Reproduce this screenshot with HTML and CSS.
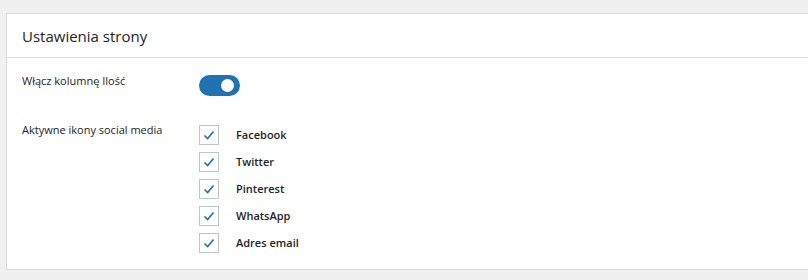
FILE: index.html
```html
<!DOCTYPE html>
<html lang="pl">
<head>
  <meta charset="UTF-8" />
  <meta name="viewport" content="width=device-width, initial-scale=1.0"/>
  <title>Ustawienia strony</title>
  <link rel="stylesheet" href="styles.css">
</head>
<body>

  <div class="card">
    <div class="card-header">Ustawienia strony</div>
    <div class="card-body">

      <div class="row">
        <div class="label">Włącz kolumnę Ilość</div>
        <div class="control">
          <span class="toggle on"><span class="knob"></span></span>
        </div>
      </div>

      <div class="row">
        <div class="label">Aktywne ikony social media</div>
        <div class="control checks">
          <label class="check"><span class="box"><svg viewBox="0 0 20 20"><path d="M5 10.5 L8.5 14 L15 6"/></svg></span>Facebook</label>
          <label class="check"><span class="box"><svg viewBox="0 0 20 20"><path d="M5 10.5 L8.5 14 L15 6"/></svg></span>Twitter</label>
          <label class="check"><span class="box"><svg viewBox="0 0 20 20"><path d="M5 10.5 L8.5 14 L15 6"/></svg></span>Pinterest</label>
          <label class="check"><span class="box"><svg viewBox="0 0 20 20"><path d="M5 10.5 L8.5 14 L15 6"/></svg></span>WhatsApp</label>
          <label class="check"><span class="box"><svg viewBox="0 0 20 20"><path d="M5 10.5 L8.5 14 L15 6"/></svg></span>Adres email</label>
        </div>
      </div>

    </div>
  </div>

</body>
</html>
```

FILE: styles.css
```css
* {
  box-sizing: border-box;
  margin: 0;
  padding: 0;
  font-family: "Open Sans", Arial, sans-serif;
}

body {
  background-color: #f0f0f1;
  padding: 13px 0 0 6px;
  overflow: hidden;
  color: #1d2327;
}

.card {
  width: 830px;
  background-color: #fff;
  border: 1px solid #dcdcde;
}

.card-header {
  height: 44px;
  padding: 0 15px;
  display: flex;
  align-items: center;
  font-size: 15px;
  border-bottom: 1px solid #dcdcde;
}

.card-body {
  padding: 15px 15px 16px;
}

.row {
  display: flex;
  margin-bottom: 26px;
}

.row:last-child {
  margin-bottom: 0;
}

.label {
  width: 177px;
  font-size: 11px;
  line-height: 16px;
}

.toggle {
  display: block;
  width: 41px;
  height: 21px;
  margin-top: 2px;
  border-radius: 11px;
  background-color: #2271b1;
  position: relative;
}

.knob {
  position: absolute;
  top: 4px;
  right: 6px;
  width: 13px;
  height: 13px;
  border-radius: 50%;
  background-color: #fff;
}

.checks {
  display: flex;
  flex-direction: column;
  gap: 7px;
  margin-top: 3px;
}

.check {
  display: flex;
  align-items: center;
  gap: 17px;
  font-size: 11px;
  font-weight: 600;
  line-height: 20px;
}

.box {
  width: 20px;
  height: 20px;
  border: 1px solid #c3c4c7;
  display: flex;
  align-items: center;
  justify-content: center;
}

.box svg {
  width: 18px;
  height: 18px;
  fill: none;
  stroke: #2271b1;
  stroke-width: 1.8;
}
```
